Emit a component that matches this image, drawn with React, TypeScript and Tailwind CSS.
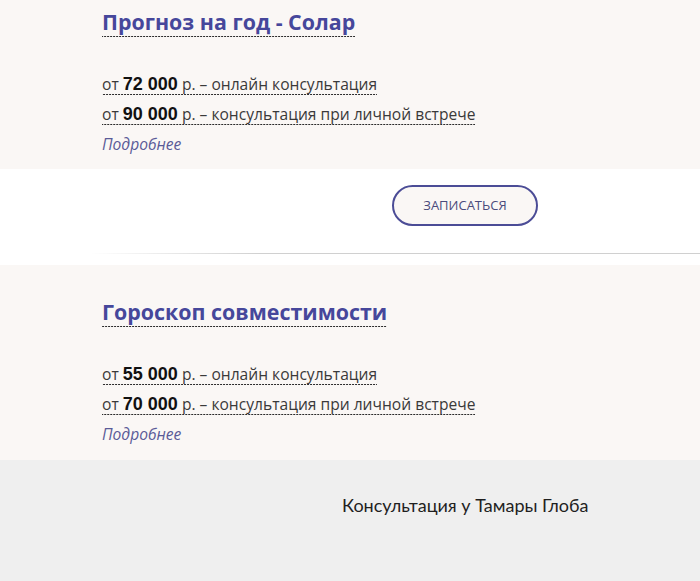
import React from 'react';

interface Offer {
  title: string;
  online: string;
  personal: string;
}

const dash =
  'bg-[linear-gradient(to_right,#2b2b2b_67%,transparent_67%)] bg-[length:3px_1px] bg-repeat-x bg-bottom';

const OfferBlock: React.FC<{ offer: Offer; top: string; bottom: string }> = ({ offer, top, bottom }) => (
  <section className={`bg-[#faf7f5] pl-[102px] ${top} ${bottom}`}>
    <div
      className={`inline-block h-[29px] text-[21.4px] leading-[28px] font-bold text-[#46479b] ${dash}`}
      style={{ fontFamily: '"Open Sans", sans-serif' }}
    >
      {offer.title}
    </div>
    <div className="mt-[36px] flex flex-col items-start gap-[8px] text-[15.6px] text-[#3a3a3a]" style={{ fontFamily: '"Open Sans", sans-serif' }}>
      <p className={`h-[22px] leading-[23px] overflow-visible ${dash}`}>
        от <b className="text-[18px] text-[#111]" style={{ fontFamily: '"Liberation Sans", Arial, sans-serif' }}>{offer.online}</b> р. – онлайн консультация
      </p>
      <p className={`h-[22px] leading-[23px] overflow-visible ${dash}`}>
        от <b className="text-[18px] text-[#111]" style={{ fontFamily: '"Liberation Sans", Arial, sans-serif' }}>{offer.personal}</b> р. – консультация при личной встрече
      </p>
    </div>
    <a className="block h-[20px] mt-[8px] text-[15.6px] leading-[22px] italic text-[#5a5b98]" style={{ fontFamily: '"Open Sans", sans-serif' }}>
      Подробнее
    </a>
  </section>
);

export default function App() {
  return (
    <div className="w-[700px] h-[581px] overflow-hidden bg-white">
      <OfferBlock offer={{ title: 'Прогноз на год - Солар', online: '72 000', personal: '90 000' }} top="pt-[8px]" bottom="pb-[16px]" />

      <div className="h-[96px] bg-white flex flex-col">
        <div className="flex pl-[392px] pt-[16px]">
          <button
            className="w-[146px] h-[41px] rounded-full border-2 border-[#4b4c96] bg-[#faf7f5] text-[13px] font-normal text-[#4a4b7c]"
            style={{ fontFamily: '"Open Sans", sans-serif' }}
          >
            ЗАПИСАТЬСЯ
          </button>
        </div>
        <div className="mt-[27px] ml-[90px] h-px bg-[linear-gradient(to_right,rgba(210,210,210,0),#d0d0d0_28%,#d0d0d0)]" />
      </div>

      <OfferBlock offer={{ title: 'Гороскоп совместимости', online: '55 000', personal: '70 000' }} top="pt-[33px]" bottom="pb-[17px]" />

      <footer className="h-[121px] bg-[#efefef] pl-[342px] pt-[33px]">
        <p className="text-[18px] leading-[24px] text-[#1f1f1f]" style={{ fontFamily: 'Lato, sans-serif' }}>
          Консультация у Тамары Глоба
        </p>
      </footer>
    </div>
  );
}
